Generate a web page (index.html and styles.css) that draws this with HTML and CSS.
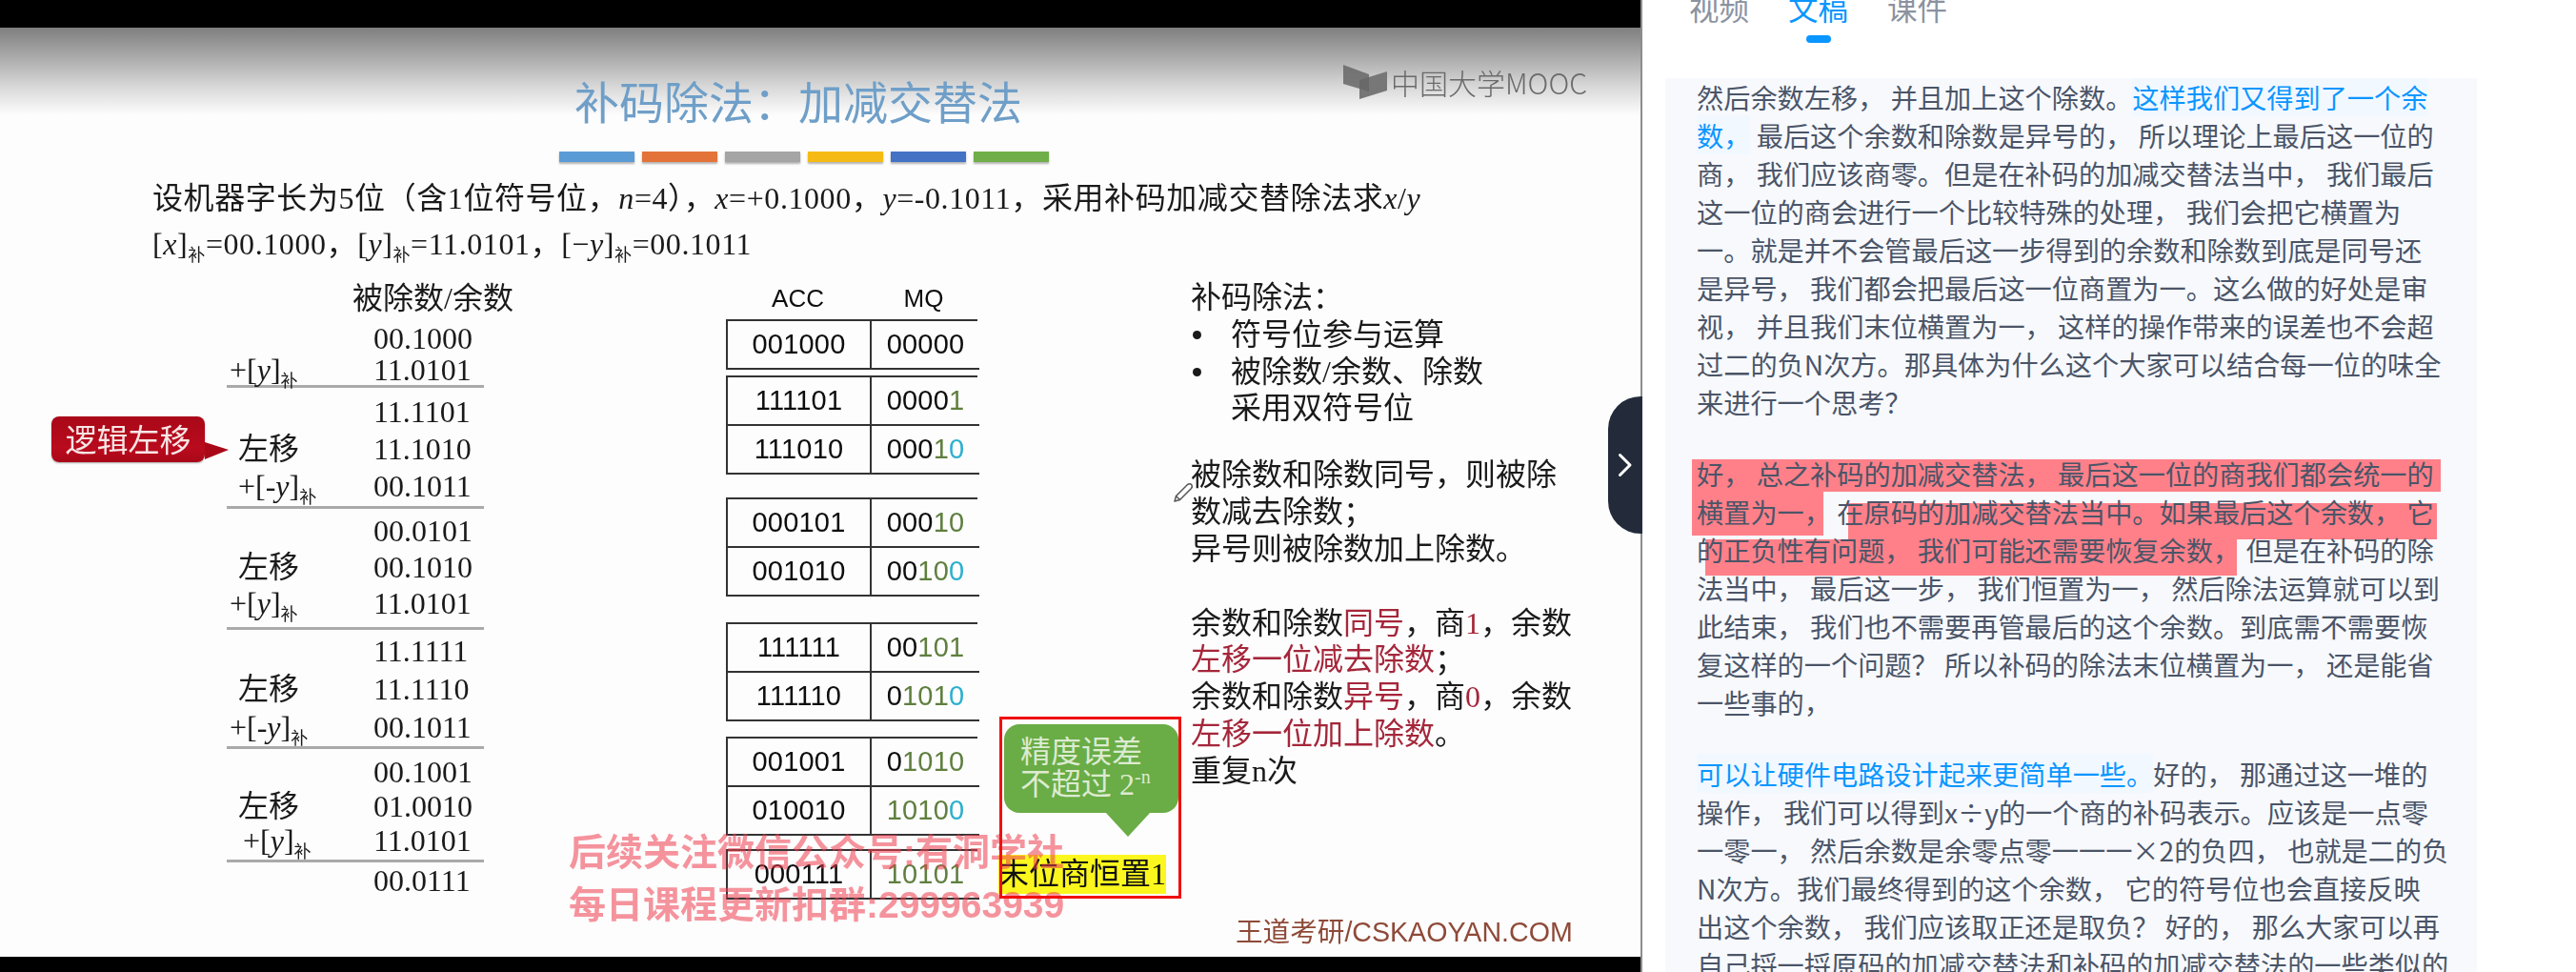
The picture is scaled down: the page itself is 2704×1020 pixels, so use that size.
FILE: index.html
```html
<!DOCTYPE html>
<html lang="zh-CN">
<head>
<meta charset="utf-8">
<title>补码除法&#xFF1A;加减交替法</title>
<link rel="stylesheet" href="styles.css">
</head>
<body>
<main class="app">
  <section class="video">
    <div class="letterbox-top"></div>
    <div class="slide">
      <div class="art">
        <h1 class="title">补码除法&#xFF1A;加减交替法</h1>
        <div class="bars"><i class="bar b1"></i><i class="bar b2"></i><i class="bar b3"></i><i class="bar b4"></i><i class="bar b5"></i><i class="bar b6"></i></div>
        <div class="logo">
          <svg class="logo-mark" viewBox="0 0 46 37" width="46" height="37"><polygon points="17,17 46,8 46,28 17,37" fill="#777"/><polygon points="0,1 27,11 27,29 0,21" fill="#666" opacity=".85"/></svg>
          <span class="logo-text">中国大学MOOC</span>
        </div>
        <div class="problem">
          <p>设机器字长为5位&#xFF08;含1位符号位&#xFF0C;<em>n</em>=4&#xFF09;&#xFF0C;<em>x</em>=+0.1000&#xFF0C;<em>y</em>=-0.1011&#xFF0C;采用补码加减交替除法求<em>x</em>/<em>y</em></p>
          <p>[<em>x</em>]<sub>补</sub>=00.1000&#xFF0C;[<em>y</em>]<sub>补</sub>=11.0101&#xFF0C;[−<em>y</em>]<sub>补</sub>=00.1011</p>
        </div>

        <div class="calc-head">被除数/余数</div>
        <div class="calc">
          <div class="step s1">
            <div class="row"><span></span><span class="val">00.1000</span></div>
            <div class="row"><span class="lab">+[<em>y</em>]<sub>补</sub></span><span class="val">11.0101</span></div>
          </div>
          <div class="step s2">
            <div class="row"><span></span><span class="val">11.1101</span></div>
            <div class="row"><span class="lab mid">左移</span><span class="val">11.1010</span></div>
            <div class="row"><span class="lab mid">+[-<em>y</em>]<sub>补</sub></span><span class="val">00.1011</span></div>
          </div>
          <div class="step s3">
            <div class="row"><span></span><span class="val">00.0101</span></div>
            <div class="row"><span class="lab mid">左移</span><span class="val">00.1010</span></div>
            <div class="row"><span class="lab">+[<em>y</em>]<sub>补</sub></span><span class="val">11.0101</span></div>
          </div>
          <div class="step s4">
            <div class="row"><span></span><span class="val">11.1111</span></div>
            <div class="row"><span class="lab mid">左移</span><span class="val">11.1110</span></div>
            <div class="row"><span class="lab">+[-<em>y</em>]<sub>补</sub></span><span class="val">00.1011</span></div>
          </div>
          <div class="step s5">
            <div class="row"><span></span><span class="val">00.1001</span></div>
            <div class="row"><span class="lab mid">左移</span><span class="val">01.0010</span></div>
            <div class="row"><span class="lab far">+[<em>y</em>]<sub>补</sub></span><span class="val">11.0101</span></div>
          </div>
          <div class="step s6">
            <div class="row"><span></span><span class="val">00.0111</span></div>
          </div>
        </div>

        <div class="shift-tag">逻辑左移</div>

        <div class="regs">
          <div class="reg-head"><span>ACC</span><span>MQ</span></div>
          <div class="reg-group single">
            <div class="cell">001000</div><div class="cell">00000</div>
          </div>
          <div class="reg-group g2">
            <div class="cell">111101</div><div class="cell">0000<b class="g">1</b></div>
            <div class="cell">111010</div><div class="cell">000<b class="g">1</b><b class="c">0</b></div>
          </div>
          <div class="reg-group g3">
            <div class="cell">000101</div><div class="cell">000<b class="g">10</b></div>
            <div class="cell">001010</div><div class="cell">00<b class="g">10</b><b class="c">0</b></div>
          </div>
          <div class="reg-group g4">
            <div class="cell">111111</div><div class="cell">00<b class="g">101</b></div>
            <div class="cell">111110</div><div class="cell">0<b class="g">101</b><b class="c">0</b></div>
          </div>
          <div class="reg-group g5">
            <div class="cell">001001</div><div class="cell">0<b class="g">1010</b></div>
            <div class="cell">010010</div><div class="cell"><b class="g">1010</b><b class="c">0</b></div>
          </div>
          <div class="reg-group g6 single">
            <div class="cell">000111</div><div class="cell"><b class="g">10101</b></div>
          </div>
        </div>

        <div class="notes">
          <p>补码除法&#xFF1A;</p>
          <ul>
            <li>符号位参与运算</li>
            <li>被除数/余数、除数<br>采用双符号位</li>
          </ul>
          <p class="gap-a">被除数和除数同号&#xFF0C;则被除<br>数减去除数&#xFF1B;<br>异号则被除数加上除数。</p>
          <p class="gap-b">余数和除数<span class="red">同号</span>&#xFF0C;商<span class="red">1</span>&#xFF0C;余数<br><span class="red">左移一位减去除数</span>&#xFF1B;<br>余数和除数<span class="red">异号</span>&#xFF0C;商<span class="red">0</span>&#xFF0C;余数<br><span class="red">左移一位加上除数</span>。<br>重复n次</p>
        </div>

        <div class="bubble">
          <p>精度误差</p>
          <p>不超过 2<sup>-n</sup></p>
        </div>
        <div class="fixed-one">末位商恒置1</div>
        <div class="brand">王道考研/CSKAOYAN.COM</div>
      </div>
      <div class="watermark">
        <p>后续关注微信公众号:有洞学社</p>
        <p>每日课程更新扣群:299963939</p>
      </div>
      <div class="mark-box"></div>
      <svg class="pencil" viewBox="0 0 22 22" width="22" height="22"><path d="M2 20 L3.5 14.5 L15.5 2.5 Q18 1 19.8 2.6 Q21 4.5 19.5 6.5 L7.5 18.5 Z M3.5 14.5 L7.5 18.5" fill="#fff" stroke="#555" stroke-width="1.5" stroke-linejoin="round"/></svg>
    </div>
    <div class="letterbox-bottom"></div>
  </section>

  <aside class="side">
    <nav class="tabs">
      <a class="tab">视频</a>
      <a class="tab active">文稿</a>
      <a class="tab">课件</a>
    </nav>
    <div class="transcript">
      <i class="hl h1"></i><i class="hl h2"></i><i class="hl h3"></i><i class="hl h4"></i>
      <p>然后余数左移&#xFF0C; 并且加上这个除数。<span class="link">这样我们又得到了一个余<br>数&#xFF0C;</span> 最后这个余数和除数是异号的&#xFF0C; 所以理论上最后这一位的<br>商&#xFF0C; 我们应该商零。但是在补码的加减交替法当中&#xFF0C; 我们最后<br>这一位的商会进行一个比较特殊的处理&#xFF0C; 我们会把它横置为<br>一。就是并不会管最后这一步得到的余数和除数到底是同号还<br>是异号&#xFF0C; 我们都会把最后这一位商置为一。这么做的好处是审<br>视&#xFF0C; 并且我们末位横置为一&#xFF0C; 这样的操作带来的误差也不会超<br>过二的负N次方。那具体为什么这个大家可以结合每一位的味全<br>来进行一个思考&#xFF1F;</p>
      <p>好&#xFF0C; 总之补码的加减交替法&#xFF0C; 最后这一位的商我们都会统一的<br>横置为一&#xFF0C; 在原码的加减交替法当中。如果最后这个余数&#xFF0C; 它<br>的正负性有问题&#xFF0C; 我们可能还需要恢复余数&#xFF0C; 但是在补码的除<br>法当中&#xFF0C; 最后这一步&#xFF0C; 我们恒置为一&#xFF0C; 然后除法运算就可以到<br>此结束&#xFF0C; 我们也不需要再管最后的这个余数。到底需不需要恢<br>复这样的一个问题&#xFF1F; 所以补码的除法末位横置为一&#xFF0C; 还是能省<br>一些事的&#xFF0C;</p>
      <p><span class="link">可以让硬件电路设计起来更简单一些。</span>好的&#xFF0C; 那通过这一堆的<br>操作&#xFF0C; 我们可以得到x÷y的一个商的补码表示。应该是一点零<br>一零一&#xFF0C; 然后余数是余零点零一一一×2的负四&#xFF0C; 也就是二的负<br>N次方。我们最终得到的这个余数&#xFF0C; 它的符号位也会直接反映<br>出这个余数&#xFF0C; 我们应该取正还是取负&#xFF1F; 好的&#xFF0C; 那么大家可以再<br>自己捋一捋原码的加减交替法和补码的加减交替法的一些类似的</p>
    </div>
    <button class="collapse" aria-label="收起">
      <svg viewBox="0 0 16 26" width="16" height="26"><path d="M2.5 2.5 L13 13 L2.5 23.5" fill="none" stroke="#fff" stroke-width="3" stroke-linecap="round" stroke-linejoin="round"/></svg>
    </button>
  </aside>
</main>
</body>
</html>
```

FILE: styles.css
```css
* { box-sizing: border-box; }
html, body { margin: 0; height: 100%; overflow: hidden; background: #fff; }
p, h1, ul { margin: 0; padding: 0; }

.app { display: flex; width: 2704px; height: 1020px; overflow: hidden; }

/* Video column */
.video { position: relative; z-index: 0; width: 1724px; flex: none; display: flex; flex-direction: column; border-right: 2px solid #8d8d8d; }
.letterbox-top { height: 29px; background: #000; flex: none; }
.letterbox-bottom { height: 16px; background: #000; flex: none; }
.slide {
  position: relative;
  flex: 1;
  background: linear-gradient(#7f7f7f 0, #a9a9a9 30px, #d8d8d8 62px, #fdfdfd 92px, #fdfdfd 100%);
  overflow: hidden;
}
.art { position: absolute; inset: 0; filter: blur(.55px); font-family: "Liberation Serif", "Noto Sans CJK SC", serif; font-size: 32px; color: #1a1a1a; }
.art em { font-style: italic; }
.art sub { font-size: 18px; line-height: 0; vertical-align: -7px; }

.title { position: absolute; left: 603px; top: 46px; font: 400 47px/60px "Noto Sans CJK SC", sans-serif; color: #6f9fc8; white-space: nowrap; }
.bars { position: absolute; left: 587px; top: 130px; display: flex; gap: 8px; }
.bar { display: block; width: 79px; height: 11px; box-shadow: 0 2px 2px rgba(0,0,0,.3); }
.b1 { background: #5b9bd5; }
.b2 { background: #e4733a; }
.b3 { background: #a5a5a5; }
.b4 { background: #f5bb14; }
.b5 { background: #4472c4; }
.b6 { background: #6fae49; }

.logo { position: absolute; left: 1410px; top: 38px; display: flex; align-items: center; gap: 4px; color: #6a6a6a; }
.logo-mark { flex: none; }
.logo-text { font: 300 30px/36px "Noto Sans CJK SC", sans-serif; white-space: nowrap; }

.problem { position: absolute; left: 160px; top: 155px; line-height: 48px; letter-spacing: .58px; white-space: nowrap; }

.calc-head { position: absolute; left: 370px; top: 264px; line-height: 40px; white-space: nowrap; }
.calc { position: absolute; left: 238px; top: 305px; width: 270px; line-height: 30px; }
.step { border-bottom: 3px solid #aaa; }
.step .row { display: grid; grid-template-columns: 154px 1fr; align-items: center; white-space: nowrap; }
.s1 { padding: 4px 0 0; }
.s1 .row { height: 33px; }
.s2 { padding: 5px 0 2px; }
.s2 .row { height: 39px; }
.s3 { padding: 4px 0 6px; }
.s3 .row { height: 38px; }
.s4 { padding: 2px 0 0; }
.s4 .row { height: 40px; }
.s5 { padding: 6px 0 2px; }
.s5 .row { height: 36px; }
.s6 { border-bottom: 0; }
.s6 .row { height: 38px; }
.lab { padding-left: 3px; }
.lab.mid { padding-left: 12px; }
.lab.far { padding-left: 17px; }

.shift-tag {
  position: absolute; left: 54px; top: 408px; width: 161px; height: 48px;
  background: linear-gradient(#a90818, #b90b1d 70%, #a90818);
  border-radius: 8px; color: #f8e6e6; text-align: center; line-height: 46px;
  font-family: "Noto Sans CJK SC", sans-serif; font-size: 33px;
  box-shadow: 0 1px 2px rgba(0,0,0,.35);
}
.shift-tag::after {
  content: ""; position: absolute; left: 100%; top: 27px;
  border-style: solid; border-width: 8px 0 10px 25px;
  border-color: transparent transparent transparent #a90818;
}

.regs { position: absolute; left: 762px; top: 264px; width: 264px; font-family: "Liberation Sans", sans-serif; font-size: 29px; color: #0d0d0d; }
.reg-head { display: grid; grid-template-columns: 151px 113px; height: 42px; line-height: 40px; text-align: center; font-size: 26px; }
.reg-group { display: grid; grid-template-columns: 151px 113px; grid-auto-rows: 51px; border: 2px solid #333; border-bottom: 0; }
.reg-group .cell { display: flex; align-items: center; justify-content: center; border-bottom: 2px solid #333; background: #fdfdfd; letter-spacing: .2px; }
.reg-group .cell:nth-child(odd) { border-right: 2px solid #333; }
.g2 { margin-top: 6px; }
.g3 { margin-top: 24px; }
.g4 { margin-top: 27px; }
.g5 { margin-top: 16px; }
.g6 { margin-top: 14px; }
.cell b { font-weight: 400; }
.cell .g { color: #5f7f3f; }
.cell .c { color: #2cb0cf; }

.notes { position: absolute; left: 1250px; top: 264px; line-height: 38.8px; white-space: nowrap; }
.notes ul { list-style: none; }
.notes li { position: relative; padding-left: 42px; }
.notes li::before { content: ""; position: absolute; left: 2px; top: 15px; width: 9px; height: 9px; border-radius: 50%; background: #1a1a1a; }
.gap-a { margin-top: 31px; }
.gap-b { margin-top: 39px; }
.red { color: #a5263a; }

.bubble {
  position: absolute; left: 1054px; top: 731px; width: 183px; height: 93px;
  background: #6aac46; border-radius: 16px; color: #dcebd0;
  padding: 12px 0 0 17px; line-height: 34px; white-space: nowrap;
}
.bubble::after {
  content: ""; position: absolute; left: 106px; top: 92px;
  border-style: solid; border-width: 26px 24px 0 24px; border-color: #6aac46 transparent transparent transparent;
}
.bubble sup { font-size: 20px; line-height: 0; vertical-align: 12px; }

.fixed-one { position: absolute; left: 1048px; top: 868px; width: 176px; height: 41px; background: #fbf71e; color: #111; line-height: 40px; white-space: nowrap; }
.brand { position: absolute; left: 1297px; top: 931px; font: 400 28.6px/36px "Liberation Sans", "Noto Sans CJK SC", sans-serif; color: #8e4a38; white-space: nowrap; }

.watermark { position: absolute; left: 597px; top: 838px; font: 700 39px/55px "Liberation Sans", "Noto Sans CJK SC", sans-serif; color: rgba(238, 60, 78, .55); white-space: nowrap; filter: blur(.4px); }
.mark-box { position: absolute; left: 1049px; top: 723px; width: 191px; height: 191px; border: 3px solid #f01010; }
.pencil { position: absolute; left: 1231px; top: 477px; }

/* Side panel */
.side { position: relative; z-index: 1; flex: 1; min-width: 0; background: #fff; }
.tabs { display: flex; gap: 41px; padding-left: 49px; margin-top: -16px; height: 98px; font: 400 31.5px/46px "Noto Sans CJK SC", sans-serif; color: #8b92a0; }
.tab { position: relative; height: 46px; white-space: nowrap; }
.tab.active { color: #0a96ff; }
.tab.active::after { content: ""; position: absolute; left: 19px; top: 53px; width: 26px; height: 8px; border-radius: 4px; background: #0a96ff; }

.transcript {
  position: relative; margin-left: 24px; width: 852px; height: 938px; padding-left: 33px;
  background: #f7f9fd; overflow: hidden;
  font: 400 28.2px/40px "Noto Sans CJK SC", sans-serif; color: #4b5568; white-space: nowrap;
}
.transcript p { position: relative; margin-bottom: 35px; }
.link { color: #0a96ff; background: #f2f8ff; }
.hl { position: absolute; background: #ff8089; }
.h1 { left: 28px; top: 400px; width: 786px; height: 34px; }
.h2 { left: 28px; top: 434px; width: 138px; height: 46px; }
.h3 { left: 192px; top: 446px; width: 618px; height: 38px; }
.h4 { left: 42px; top: 484px; width: 558px; height: 38px; }

.collapse {
  position: absolute; left: -36px; top: 416px; width: 36px; height: 144px; padding: 0 0 0 10px; border: 0;
  background: #232b3b; border-radius: 34px 0 0 34px; display: flex; align-items: center; justify-content: flex-start;
}
```
